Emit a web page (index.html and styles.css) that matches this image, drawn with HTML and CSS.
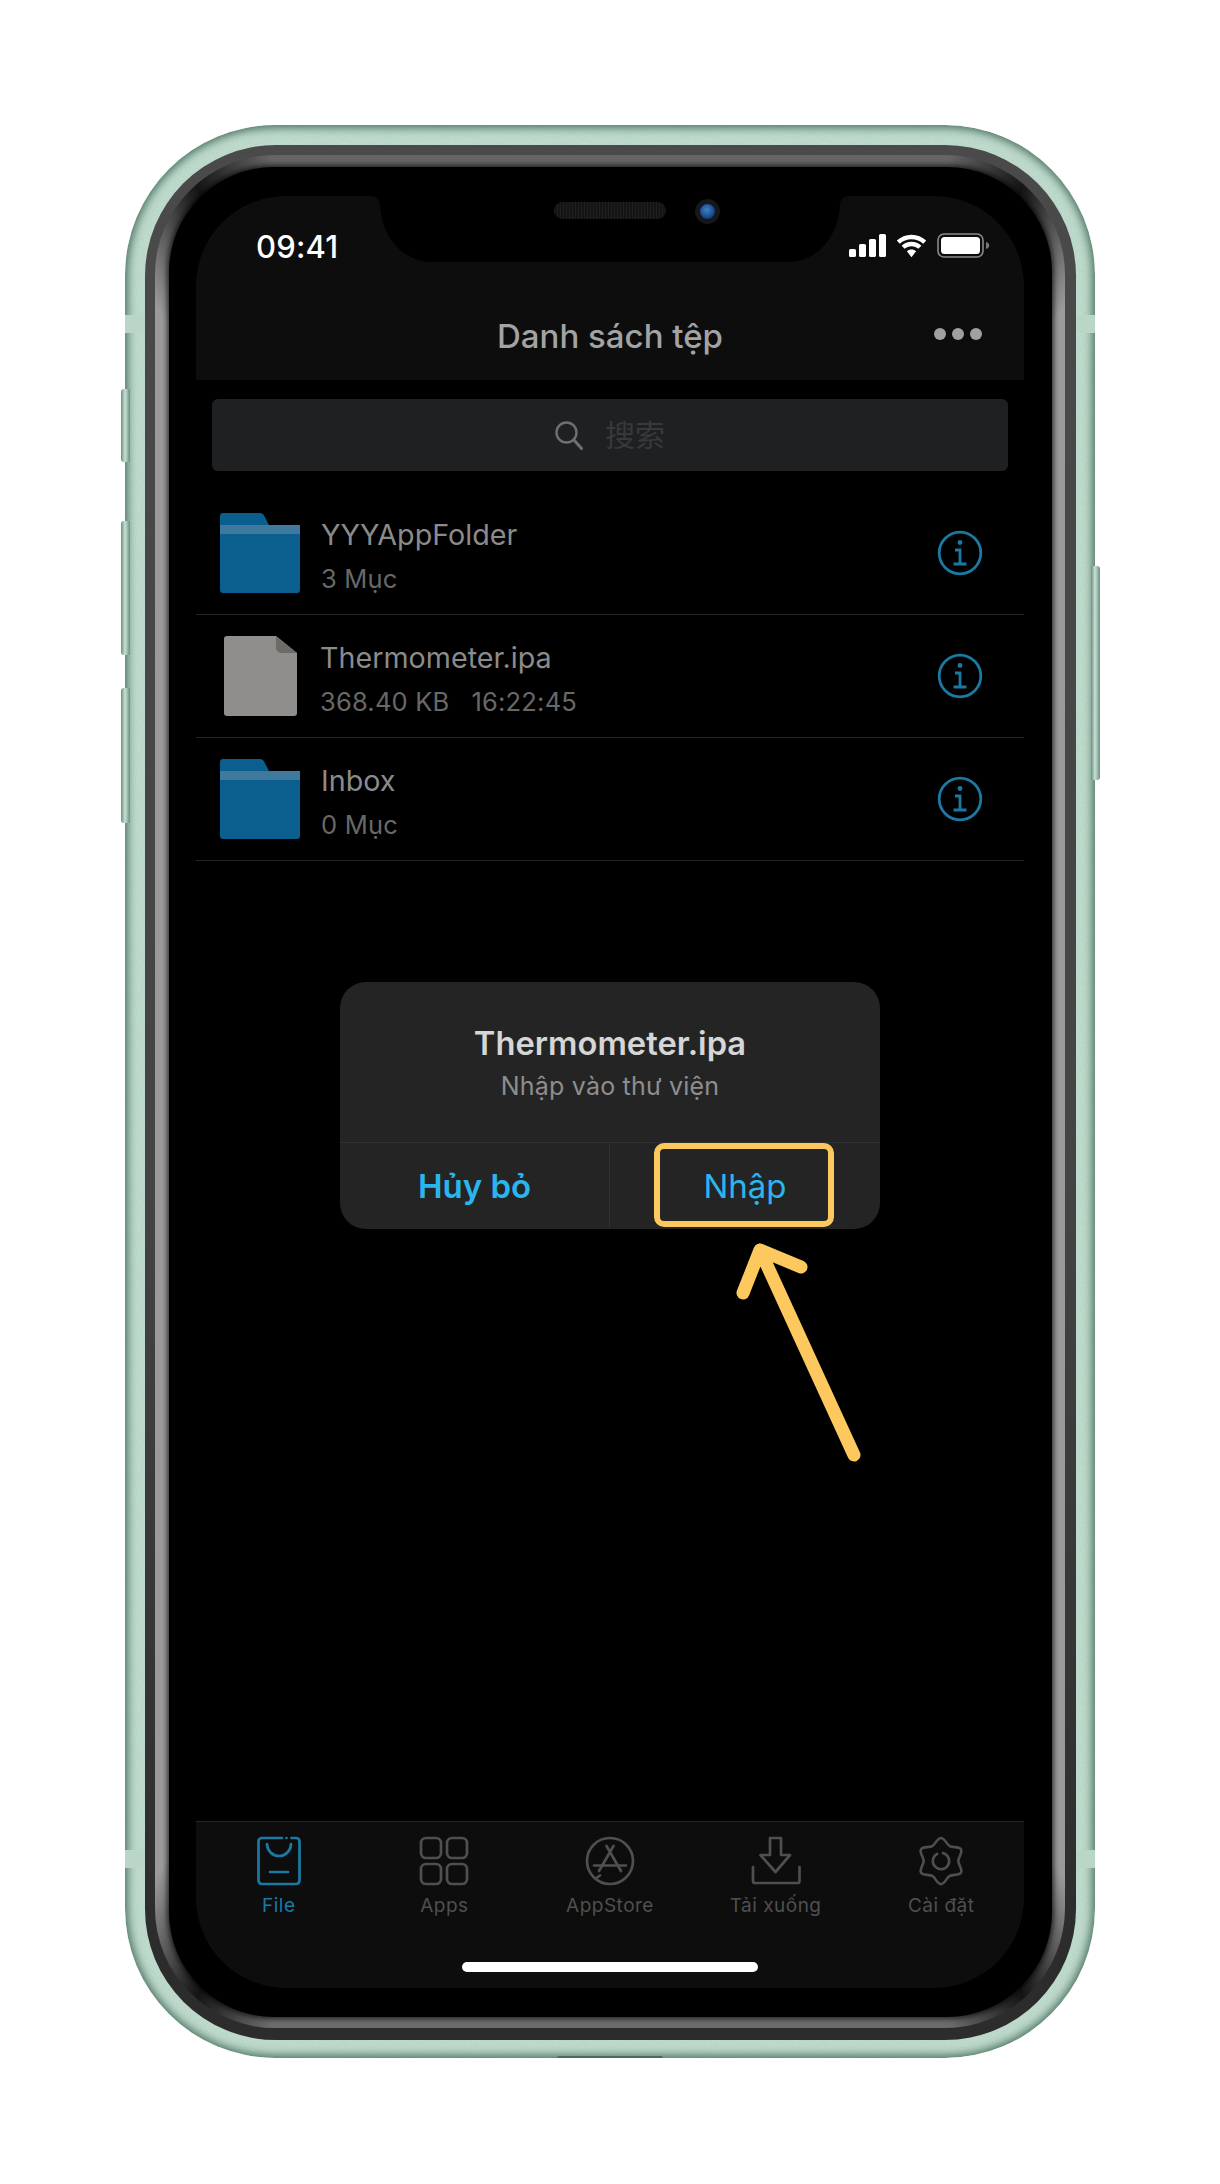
FILE: index.html
```html
<!DOCTYPE html>
<html lang="vi">
<head>
<meta charset="utf-8">
<title>Danh sách tệp</title>
<link rel="stylesheet" href="styles.css">
</head>
<body>
<div class="phone">
  <span class="side side-silent"></span>
  <span class="side side-up"></span>
  <span class="side side-down"></span>
  <span class="side side-power"></span>
  <span class="band band-tl"></span><span class="band band-tr"></span>
  <span class="band band-bl"></span><span class="band band-br"></span>
  <span class="grille"></span>
  <div class="bezel">
    <div class="ring">
      <div class="glass">
        <div class="screen">
          <header class="nav">
            <div class="status">
              <span class="clock">09:41</span>
              <div class="status-icons">
                <svg class="ic-signal" viewBox="0 0 37 23"><rect x="0" y="15" width="7" height="8" rx="1.6"/><rect x="10" y="10" width="7" height="13" rx="1.6"/><rect x="20" y="5" width="7" height="18" rx="1.6"/><rect x="30" y="0" width="7" height="23" rx="1.6"/></svg>
                <svg class="ic-wifi" viewBox="0 0 33 24"><path d="M16.5 5.2c4.5 0 8.6 1.7 11.7 4.5l3-3.1C27.300 3 22.2.8 16.5.8S5.7 3 1.800 6.600l3 3.100c3.100-2.800 7.200-4.500 11.700-4.500z"/><path d="M16.5 12.200c2.600 0 5 1 6.800 2.600l3.100-3.100c-2.600-2.400-6.100-3.900-9.900-3.900s-7.300 1.500-9.900 3.900l3.100 3.100c1.800-1.600 4.200-2.600 6.800-2.600z"/><path d="M16.5 15.600c-1.800 0-3.400.7-4.600 1.700l4.600 5.900 4.600-5.900c-1.200-1-2.800-1.700-4.600-1.700z"/></svg>
                <svg class="ic-battery" viewBox="0 0 53 25"><rect x="1" y="1" width="45" height="23" rx="6" fill="none" stroke="#8a8a8a" stroke-width="1.6"/><rect x="4" y="4" width="39" height="17" rx="3.5" fill="#fff"/><path d="M49 9c2 .5 3.2 1.8 3.2 3.5S51 15.500 49 16z" fill="#777"/></svg>
              </div>
            </div>
            <div class="titlebar">
              <h1 class="title">Danh sách tệp</h1>
              <div class="more"><i></i><i></i><i></i></div>
            </div>
          </header>

          <div class="search">
            <svg class="ic-search" viewBox="0 0 28 29"><circle cx="11.500" cy="11.500" r="10" fill="none" stroke-width="2.400"/><path d="M19 19l7.500 8.500" fill="none" stroke-width="3" stroke-linecap="round"/></svg>
            <span class="search-text">搜索</span>
          </div>

          <ul class="files">
            <li class="file">
              <svg class="ic-folder" viewBox="0 0 80 80"><path d="M0 3a3 3 0 0 1 3-3h37c2 0 3.500 1 4.300 3L49 12H77a3 3 0 0 1 3 3v62a3 3 0 0 1-3 3H3a3 3 0 0 1-3-3z" fill="#0b5f8f"/><rect y="12" width="80" height="9" fill="#3f7a9e"/></svg>
              <div class="file-text"><div class="file-name">YYYAppFolder</div><div class="file-meta">3 Mục</div></div>
              <svg class="ic-info" viewBox="0 0 46 46"><circle cx="23" cy="23" r="20.800"/><circle class="dot" cx="23" cy="12.500" r="2.400"/><path d="M18 20h5v14M16.500 34h13"/></svg>
            </li>
            <li class="file">
              <svg class="ic-doc" viewBox="0 0 73 80"><path d="M3 0h49l21 17v60a3 3 0 0 1-3 3H3a3 3 0 0 1-3-3V3a3 3 0 0 1 3-3z" fill="#8f8e8c"/><path d="M52 0l21 17H57a5 5 0 0 1-5-5z" fill="#6e6b66"/></svg>
              <div class="file-text"><div class="file-name">Thermometer.ipa</div><div class="file-meta"><span class="size">368.40 KB</span><span>16:22:45</span></div></div>
              <svg class="ic-info" viewBox="0 0 46 46"><circle cx="23" cy="23" r="20.800"/><circle class="dot" cx="23" cy="12.500" r="2.400"/><path d="M18 20h5v14M16.500 34h13"/></svg>
            </li>
            <li class="file">
              <svg class="ic-folder" viewBox="0 0 80 80"><path d="M0 3a3 3 0 0 1 3-3h37c2 0 3.500 1 4.300 3L49 12H77a3 3 0 0 1 3 3v62a3 3 0 0 1-3 3H3a3 3 0 0 1-3-3z" fill="#0b5f8f"/><rect y="12" width="80" height="9" fill="#3f7a9e"/></svg>
              <div class="file-text"><div class="file-name">Inbox</div><div class="file-meta">0 Mục</div></div>
              <svg class="ic-info" viewBox="0 0 46 46"><circle cx="23" cy="23" r="20.800"/><circle class="dot" cx="23" cy="12.500" r="2.400"/><path d="M18 20h5v14M16.500 34h13"/></svg>
            </li>
          </ul>

          <nav class="tabs">
            <div class="tab tab-on">
              <svg viewBox="0 0 44 50"><path d="M25 2H5a3.500 3.500 0 0 0-3.500 3.500v39A3.500 3.500 0 0 0 5 48h34a3.500 3.500 0 0 0 3.500-3.500v-39A3.500 3.500 0 0 0 39 2h-4.500"/><path d="M29.500 2h.01"/><path d="M10 8c0 6.500 5.500 12 12 12S34 14.500 34 8"/><path d="M13 36h18"/></svg>
              <span>File</span>
            </div>
            <div class="tab">
              <svg viewBox="0 0 50 50"><rect x="2" y="2" width="20" height="20" rx="5"/><rect x="28" y="2" width="20" height="20" rx="5"/><rect x="2" y="28" width="20" height="20" rx="5"/><rect x="28" y="28" width="20" height="20" rx="5"/></svg>
              <span>Apps</span>
            </div>
            <div class="tab">
              <svg viewBox="0 0 50 50"><circle cx="25" cy="25" r="23"/><path d="M28.500 10L14 35M21.500 10L36 35M9 29.500h32M15 39.500l-3 2"/></svg>
              <span>AppStore</span>
            </div>
            <div class="tab">
              <svg viewBox="0 0 50 50"><path d="M19 2h11v17h9L24.500 36 9.500 19H19z"/><path d="M2 31v14a2 2 0 0 0 2 2h42.500a2 2 0 0 0 2-2V31"/></svg>
              <span>Tải xuống</span>
            </div>
            <div class="tab">
              <svg viewBox="-1 -1 52 52"><path d="M25 1C29 1 30.540 7.410 34 9.410S43.780 9.540 45.780 13S43 21 43 25S47.780 33.540 45.780 37S37.460 38.590 34 40.590S29 49 25 49S19.460 42.590 16 40.590S6.220 40.460 4.220 37S7 29 7 25S2.220 16.460 4.220 13S12.540 11.410 16 9.410S21 1 25 1z"/><path d="M27 16.740A8.500 8.500 0 1 1 21 17.500"/></svg>
              <span>Cài đặt</span>
            </div>
          </nav>
          <div class="home"></div>

          <div class="notch">
            <svg class="notch-shape" viewBox="0 0 480 66"><path d="M0 0c7 0 10 4 10 10 2 32 24 56 52 56h356c28 0 50-24 52-56 0-6 3-10 10-10z"/></svg>
            <span class="speaker"></span>
            <span class="camera"></span>
          </div>

          <div class="dialog">
            <div class="dialog-body">
              <div class="dialog-title">Thermometer.ipa</div>
              <div class="dialog-sub">Nhập vào thư viện</div>
            </div>
            <div class="dialog-actions">
              <div class="action action-cancel">Hủy bỏ</div>
              <div class="action action-ok">Nhập</div>
            </div>
            <span class="highlight"></span>
          </div>

          <svg class="arrow" viewBox="0 0 140 240"><path d="M124 225L30 20M13 63L30 20L71 37"/></svg>
        </div>
      </div>
    </div>
  </div>
</div>
</body>
</html>
```

FILE: styles.css
```css
* { box-sizing: border-box; }
html, body { margin: 0; background: #fff; }
body {
  width: 1220px;
  height: 2184px;
  padding: 125px 125px 0;
  font-family: Inter, "Noto Sans CJK SC", "Liberation Sans", sans-serif;
}

/* Device shell: each ring of the bezel is a nested padded box */
.phone {
  position: relative;
  width: 970px;
  height: 1933px;
  padding: 20px 19px 18px 20px;
  border-radius: 150px;
  background: url("data:image/svg+xml,%3Csvg xmlns='http://www.w3.org/2000/svg' width='240' height='240'%3E%3Cfilter id='n'%3E%3CfeTurbulence type='fractalNoise' baseFrequency='.8' numOctaves='2'/%3E%3CfeColorMatrix values='0 0 0 0 .45 0 0 0 0 .6 0 0 0 0 .52 0 0 0 1.100 -.35'/%3E%3C/filter%3E%3Crect width='240' height='240' filter='url(%23n)'/%3E%3C/svg%3E"), #bfdccd;
  box-shadow: inset 0 0 9px 3px #4f7464;
}
.bezel {
  height: 100%;
  padding: 10px 11px 12px 10px;
  border-radius: 131px;
  background: linear-gradient(#4a4a4a, #444 55%, #2c2c2c 95%);
}
.ring {
  height: 100%;
  padding: 12px 13px 11px 14px;
  border-radius: 120px;
  background: conic-gradient(#656565 0deg, #656565 20deg, #151515 24.500deg, #2a2a2a 25.500deg, #9a9a9a 30deg, #9a9a9a 150deg, #2a2a2a 154.500deg, #151515 155.500deg, #6c6c6c 160deg, #6c6c6c 200deg, #151515 204.500deg, #2a2a2a 205.500deg, #9a9a9a 210deg, #9a9a9a 330deg, #2a2a2a 334.500deg, #151515 335.500deg, #656565 340deg, #656565 360deg);
}
.glass {
  height: 100%;
  padding: 29px 28px 29px 27px;
  border-radius: 105px;
  background: #000;
  box-shadow: 0 0 5px 2px rgba(0, 0, 0, .65);
}

.side {
  position: absolute;
  width: 9px;
  background: linear-gradient(90deg, #6a8f7f, #c8e2d5 45%, #6a8f7f);
  border-radius: 3px 0 0 3px;
}
.side-silent { left: -4px; top: 264px; height: 73px; }
.side-up { left: -4px; top: 396px; height: 134px; }
.side-down { left: -4px; top: 563px; height: 135px; }
.side-power { right: -5px; top: 441px; height: 214px; border-radius: 0 3px 3px 0; }

.band { position: absolute; width: 20px; height: 18px; background: #b9d6c7; }
.band-tl { left: 0; top: 190px; }
.band-tr { right: 0; top: 190px; width: 19px; }
.band-bl { left: 0; top: 1725px; }
.band-br { right: 0; top: 1725px; width: 19px; }
.grille {
  position: absolute;
  left: 432px;
  bottom: 0;
  width: 106px;
  height: 2px;
  border-radius: 2px 2px 0 0;
  background: #4f6a5d;
}

/* Screen */
.screen {
  position: relative;
  display: flex;
  flex-direction: column;
  height: 100%;
  border-radius: 90px;
  background: #000;
  overflow: hidden;
  color: #8a8a8a;
}
.nav { height: 184px; background: #0d0d0d; flex: none; }
.status {
  display: flex;
  justify-content: space-between;
  align-items: center;
  height: 92px;
  padding: 10px 34px 0 60px;
}
.clock { position: relative; z-index: 2; color: #fff; font-size: 31px; font-weight: 500; letter-spacing: .2px; line-height: 36px; }
.status-icons { display: flex; align-items: center; gap: 9px; height: 26px; margin-bottom: 3px; }
.status-icons svg { display: block; fill: #fff; }
.ic-signal { width: 37px; height: 23px; }
.ic-wifi { width: 33px; height: 24px; }
.ic-battery { width: 53px; height: 25px; }
.titlebar {
  position: relative;
  display: flex;
  justify-content: center;
  align-items: center;
  height: 92px;
  padding-top: 4px;
}
.title { margin: 0; font-size: 33px; font-weight: 500; color: #a3a3a3; line-height: 40px; }
.more { position: absolute; right: 42px; top: 40px; display: flex; gap: 6px; }
.more i { width: 12px; height: 12px; border-radius: 50%; background: #a0a0a0; }

.search {
  flex: none;
  display: flex;
  justify-content: center;
  align-items: center;
  gap: 22px;
  height: 72px;
  margin: 19px 16px 21px;
  border-radius: 6px;
  background: #1f2022;
}
.ic-search { width: 28px; height: 29px; stroke: #6f6f6f; }
.search-text { font-size: 30px; color: #38393b; line-height: 36px; }

.files { flex: none; list-style: none; margin: 0; padding: 0; }
.file {
  display: flex;
  align-items: center;
  height: 123px;
  padding: 0 41px 0 24px;
  border-bottom: 1px solid #242424;
}
.ic-folder { width: 80px; height: 80px; flex: none; margin-right: 21px; }
.ic-doc { width: 73px; height: 80px; flex: none; margin: 0 23px 0 4px; }
.file-text { flex: 1; min-width: 0; padding-top: 4px; }
.file-name { font-size: 28.700px; line-height: 38px; color: #8b8b8b; }
.file-meta { margin-top: 10px; font-size: 25.500px; line-height: 30px; color: #686868; letter-spacing: .2px; }
.size { margin-right: 22px; }
.ic-info { width: 46px; height: 46px; flex: none; fill: none; stroke: #1a7aa3; stroke-width: 2.800; }
.ic-info .dot { fill: #1a7aa3; stroke: none; }

.tabs {
  flex: none;
  display: grid;
  grid-template-columns: repeat(5, 1fr);
  height: 167px;
  margin-top: auto;
  padding: 14px 0 0;
  background: #0d0d0d;
  border-top: 1px solid #262626;
}
.tab { display: flex; flex-direction: column; align-items: center; gap: 8px; font-size: 19px; line-height: 24px; letter-spacing: .5px; color: #4f4f4f; }
.tab svg { display: block; width: 50px; height: 50px; fill: none; stroke: #4f4f4f; stroke-width: 2.700; stroke-linecap: round; stroke-linejoin: round; }
.tab-on { color: #1a7aa3; }
.tab-on svg { stroke: #1a7aa3; width: 44px; }
.home {
  position: absolute;
  left: 266px;
  bottom: 16px;
  width: 296px;
  height: 10px;
  border-radius: 5px;
  background: #fff;
}

.notch { position: absolute; left: 174px; top: 0; width: 480px; height: 66px; }
.notch-shape { display: block; width: 480px; height: 66px; fill: #000; }
.speaker {
  position: absolute;
  left: 184px;
  top: 6px;
  width: 112px;
  height: 17px;
  border-radius: 9px;
  background: #141414 repeating-linear-gradient(90deg, #1f1f1f 0 1px, #141414 1px 3px);
}
.camera {
  position: absolute;
  left: 325px;
  top: 3px;
  width: 25px;
  height: 25px;
  border-radius: 50%;
  border: 5px solid #16171a;
  background: radial-gradient(circle at 45% 40%, #3e82c8, #123a78 75%);
}

/* Dialog */
.dialog {
  position: absolute;
  left: 144px;
  top: 786px;
  width: 540px;
  height: 247px;
  display: flex;
  flex-direction: column;
  border-radius: 26px;
  background: #242424;
}
.dialog-body { height: 160px; padding-top: 41px; text-align: center; }
.dialog-title { font-size: 32.700px; font-weight: 600; line-height: 40px; color: #d6d6d6; }
.dialog-sub { margin-top: 7px; font-size: 25px; line-height: 32px; color: #8e8e8e; letter-spacing: .2px; }
.dialog-actions { flex: 1; display: grid; grid-template-columns: 270px 270px; border-top: 1px solid #303030; }
.action { display: flex; justify-content: center; align-items: center; font-size: 33px; color: #2bb5ee; line-height: 40px; }
.action-cancel { font-weight: 600; border-right: 1px solid #303030; }
.highlight {
  position: absolute;
  left: 314px;
  top: 161px;
  width: 180px;
  height: 84px;
  border: 6px solid #fdc95e;
  border-radius: 10px;
}
.arrow {
  position: absolute;
  left: 534px;
  top: 1034px;
  width: 140px;
  height: 240px;
  fill: none;
  stroke: #fdc95e;
  stroke-width: 13;
  stroke-linecap: round;
  stroke-linejoin: round;
}
```
